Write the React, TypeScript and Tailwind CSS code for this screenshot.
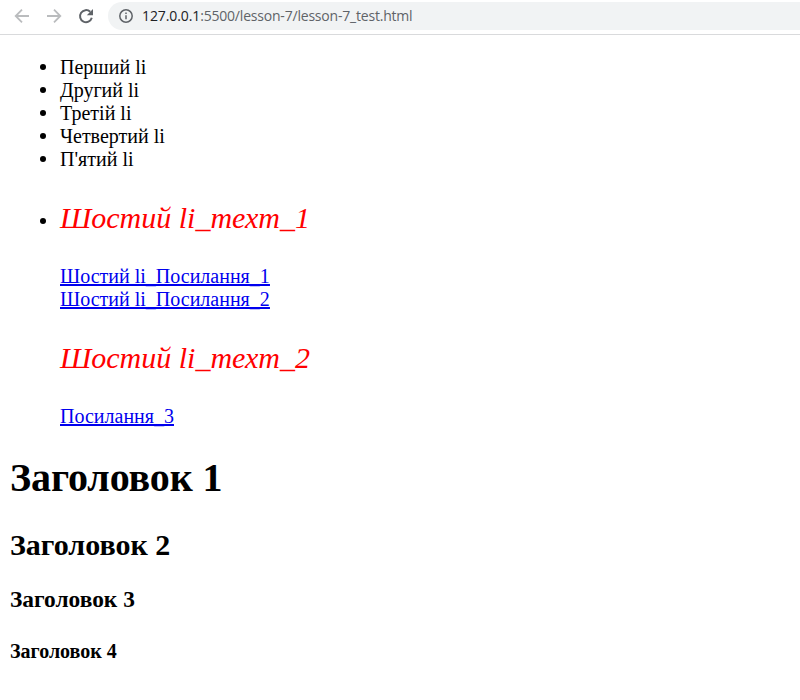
import React from "react";

const listItems = ["Перший li", "Другий li", "Третій li", "Четвертий li", "П'ятий li"];

function Bullet({ className = "" }: { className?: string }) {
  return <span className={`mr-[14px] h-[6px] w-[6px] shrink-0 rounded-full bg-black ${className}`} />;
}

function AddressBar() {
  return (
    <header className="flex h-[35px] items-start border-b border-[#d9dadc] bg-white pl-[13px]">
      <svg className="mt-[7px] h-[18px] w-[18px]" viewBox="0 0 18 18" fill="none" stroke="#babcbe" strokeWidth="1.8">
        <path d="M16 9H3M9 2.7L2.7 9L9 15.3" />
      </svg>
      <svg className="ml-[14px] mt-[7px] h-[18px] w-[18px]" viewBox="0 0 18 18" fill="none" stroke="#babcbe" strokeWidth="1.8">
        <path d="M2 9H15M9 2.7L15.3 9L9 15.3" />
      </svg>
      <svg className="ml-[14px] mt-[7px] h-[18px] w-[18px]" viewBox="0 0 18 18" fill="none" stroke="#5f6368" strokeWidth="2">
        <path d="M13.2 4.8A6 6 0 1 0 14.8 10.8" />
        <path d="M16 2V8.2H9.8Z" fill="#5f6368" stroke="none" />
      </svg>
      <div className="ml-[13px] mt-[2px] flex h-[28px] grow items-center rounded-l-full bg-[#f1f3f4] pl-[11px]">
        <svg className="h-[14px] w-[14px]" viewBox="0 0 14 14" fill="none" stroke="#5f6368" strokeWidth="1.5">
          <circle cx="7" cy="7" r="6.2" />
          <path d="M7 6.2V10.3M7 3.5V5" />
        </svg>
        <span className="ml-[9px] whitespace-nowrap font-['Open_Sans',sans-serif] text-[14px] leading-5 tracking-[-0.2px] text-[#5f6368]">
          <span className="tracking-[-0.1px] text-[#202124]">127.0.0.1</span>:5500/lesson-7/lesson-7_test.html
        </span>
      </div>
    </header>
  );
}

export default function App() {
  return (
    <div className="h-[700px] w-[800px] overflow-hidden bg-white font-['Liberation_Serif',serif] text-[20px] leading-[23px] text-black">
      <AddressBar />
      <main className="px-[10px] pt-[21px]">
        <ul className="pl-[30px]">
          {listItems.map((item) => (
            <li key={item} className="flex items-center">
              <Bullet className="mb-[2px]" />
              {item}
            </li>
          ))}
          <li className="pt-[29px]">
            <p className="flex h-[35px] items-center text-[30px] italic leading-[35px] text-[#f00]">
              <Bullet className="mt-[6px]" />
              Шостий li_техт_1
            </p>
            <div className="flex flex-col items-start pl-[20px] pt-[30px] text-[#0000ee] underline">
              <a href="#one">Шостий li_Посилання_1</a>
              <a href="#two">Шостий li_Посилання_2</a>
            </div>
            <p className="mt-[29px] pl-[20px] text-[30px] italic leading-[35px] text-[#f00]">Шостий li_техт_2</p>
            <a href="#three" className="ml-[20px] mt-[30px] block w-fit text-[#0000ee] underline">Посилання_3</a>
          </li>
        </ul>
        <h1 className="mt-[27px] text-[40px] font-bold leading-[46px] tracking-[-0.1px]">Заголовок 1</h1>
        <h2 className="mt-[27px] text-[30px] font-bold leading-[34px]">Заголовок 2</h2>
        <h3 className="mt-[24px] text-[23.4px] font-bold leading-[27px]">Заголовок 3</h3>
        <h4 className="mt-[27px] text-[20px] font-bold leading-[23px]">Заголовок 4</h4>
      </main>
    </div>
  );
}
